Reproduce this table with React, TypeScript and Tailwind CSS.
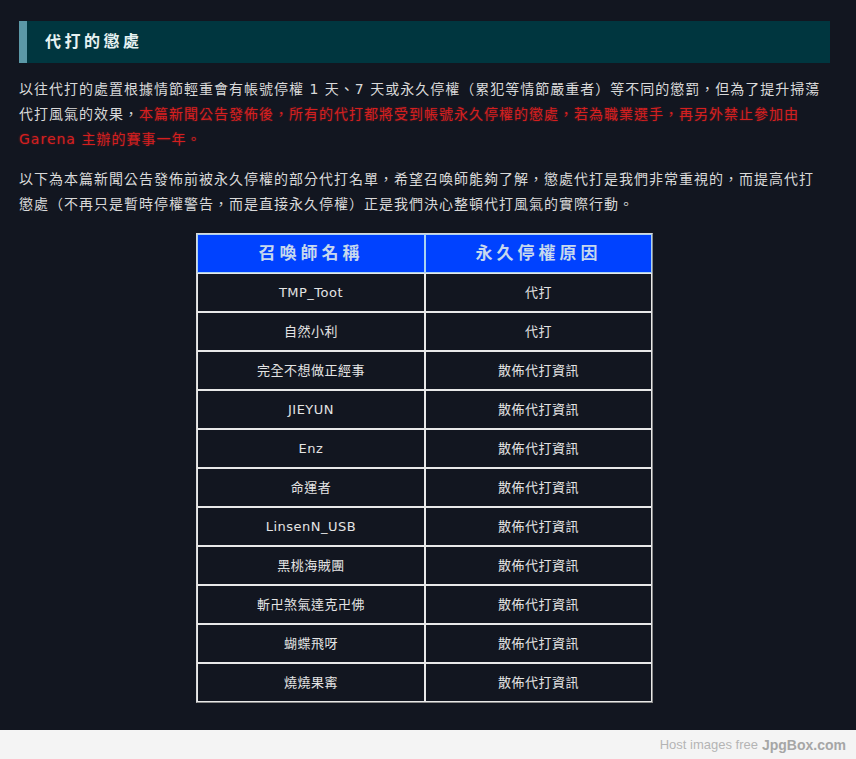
const rows: [string, string][] = [
  ["TMP_Toot", "代打"],
  ["自然小利", "代打"],
  ["完全不想做正經事", "散佈代打資訊"],
  ["JIEYUN", "散佈代打資訊"],
  ["Enz", "散佈代打資訊"],
  ["命運者", "散佈代打資訊"],
  ["LinsenN_USB", "散佈代打資訊"],
  ["黑桃海賊團", "散佈代打資訊"],
  ["斬卍煞氣達克卍佛", "散佈代打資訊"],
  ["蝴蝶飛呀", "散佈代打資訊"],
  ["燒燒果寗", "散佈代打資訊"],
];

const glow = "text-[#d41f1f] [text-shadow:0_0_2px_rgba(255,40,40,0.4)]";

export default function App() {
  return (
    <div className="flex min-h-[759px] w-[856px] flex-col bg-[#121620] font-['DejaVu_Sans','Noto_Sans_CJK_TC',sans-serif]">
      <div className="flex-1 pb-[27px] pl-[19px] pt-[21px]">
        {/* section heading */}
        <div className="flex h-[42px] w-[811px] items-center border-l-[8px] border-[#5b98a7] bg-[#00363f] pl-[18px]">
          <h2 className="text-[16px] font-bold tracking-[3.5px] text-[#e6f2f2]">代打的懲處</h2>
        </div>

        <p className="mt-[14px] whitespace-nowrap text-[14px] leading-[25px] tracking-[1px] text-[#d9d9d9]">
          以往代打的處置根據情節輕重會有帳號停權 1 天、7 天或永久停權（累犯等情節嚴重者）等不同的懲罰，但為了提升掃蕩
          <br />
          代打風氣的效果，
          <span className={glow}>本篇新聞公告發佈後，所有的代打都將受到帳號永久停權的懲處，若為職業選手，再另外禁止參加由</span>
          <br />
          <span className={glow}>Garena 主辦的賽事一年。</span>
        </p>

        <p className="mt-[15px] whitespace-nowrap text-[14px] leading-[25px] tracking-[1px] text-[#d9d9d9]">
          以下為本篇新聞公告發佈前被永久停權的部分代打名單，希望召喚師能夠了解，懲處代打是我們非常重視的，而提高代打
          <br />
          懲處（不再只是暫時停權警告，而是直接永久停權）正是我們決心整頓代打風氣的實際行動。
        </p>

        <div className="mt-[16px] flex w-[811px] justify-center">
          <table className="w-[457px] table-fixed border-separate border-spacing-0 border border-t-[#d8d8d8] border-l-[#d8d8d8] border-b-[#8a8a8a] border-r-[#8a8a8a]">
            <thead>
              <tr>
                <th className="h-[39px] w-[228px] border border-[#a9d2f2] bg-[#0042ff] text-center text-[17px] font-bold tracking-[4px] text-[#c6d8ee]">
                  召喚師名稱
                </th>
                <th className="h-[39px] border border-[#a9d2f2] bg-[#0042ff] text-center text-[17px] font-bold tracking-[4px] text-[#c6d8ee]">
                  永久停權原因
                </th>
              </tr>
            </thead>
            <tbody>
              {rows.map(([name, reason]) => (
                <tr key={name}>
                  <td className="h-[39px] border border-[#e8e8e8] text-center text-[13px] tracking-[0.5px] text-[#e4e4e4]">
                    {name}
                  </td>
                  <td className="h-[39px] border border-[#e8e8e8] text-center text-[13px] tracking-[0.5px] text-[#e4e4e4]">
                    {reason}
                  </td>
                </tr>
              ))}
            </tbody>
          </table>
        </div>
      </div>

      <div className="flex h-[30px] items-center justify-end bg-[#f4f4f4] pr-[10px] font-['Liberation_Sans',Arial,sans-serif]">
        <span className="text-[13px] text-[#b4b4b4]">Host images free</span>
        <span className="ml-[4px] text-[14px] font-bold text-[#a6a6a6]">JpgBox.com</span>
      </div>
    </div>
  );
}
